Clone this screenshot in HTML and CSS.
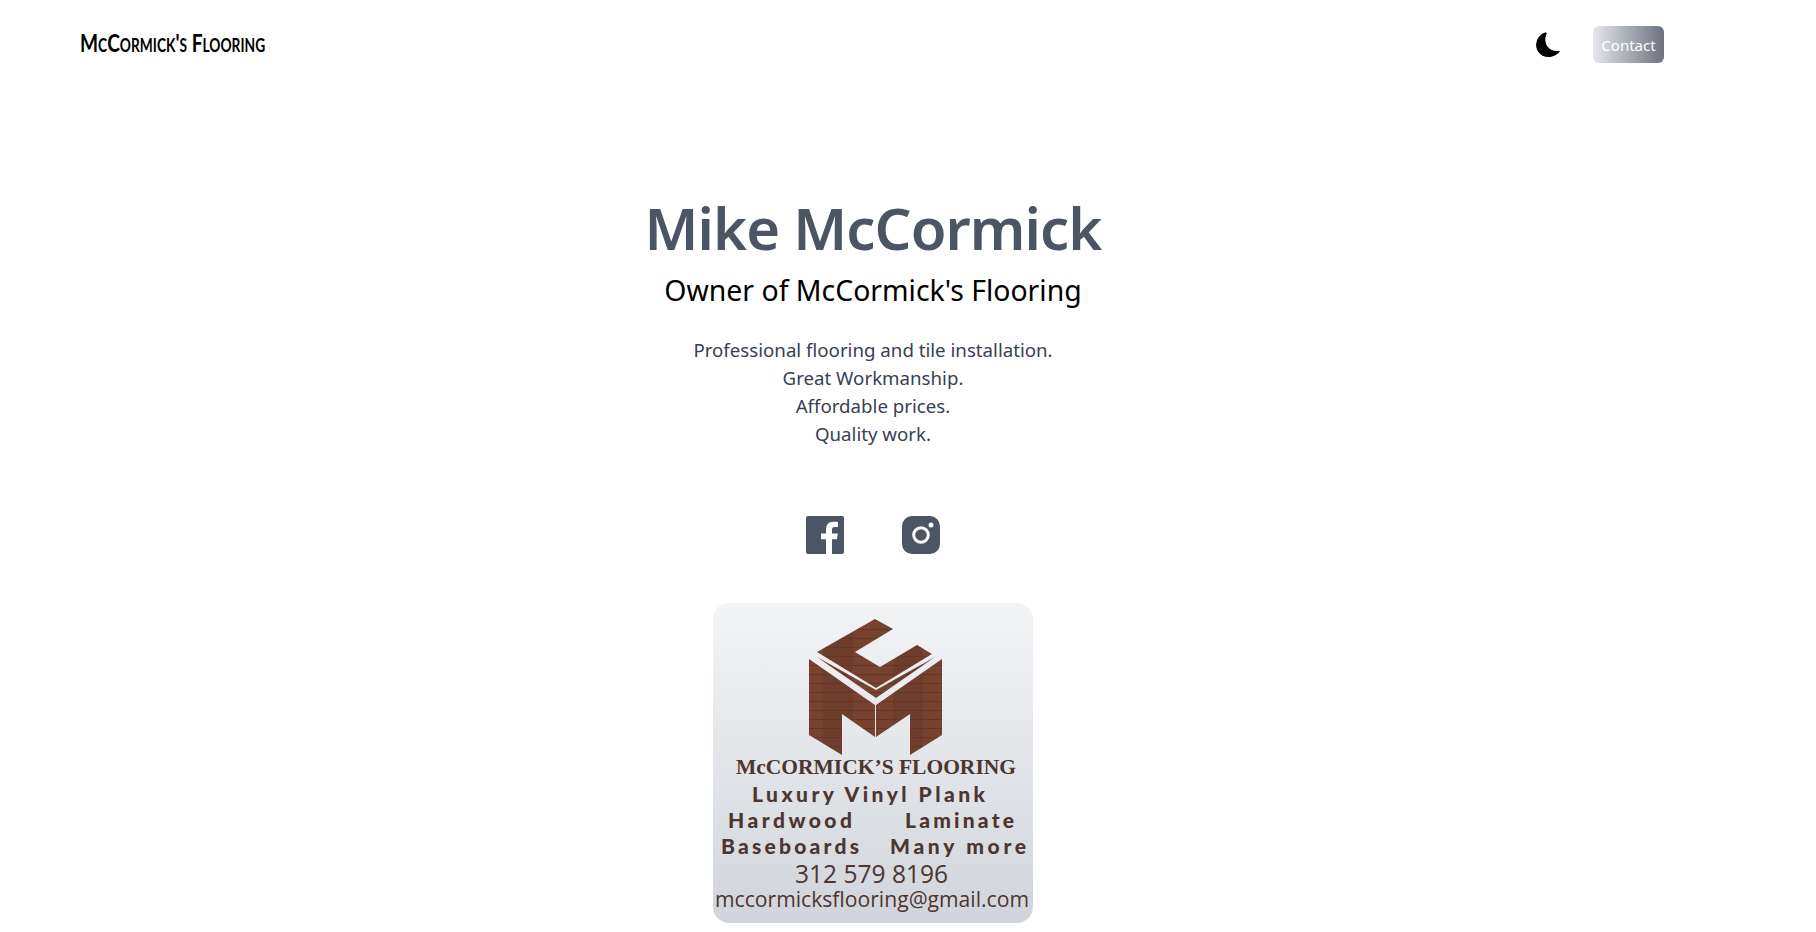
FILE: index.html
```html
<!DOCTYPE html>
<html lang="en">
<head>
<meta charset="utf-8">
<title>McCormick's Flooring</title>
<link rel="stylesheet" href="styles.css">
</head>
<body>
<header class="topbar">
  <a class="brand" href="#">McCormick's Flooring</a>
  <div class="actions">
    <button class="theme" aria-label="Toggle theme">
      <svg viewBox="0 0 24 24" width="26" height="26"><path fill="#000" d="M10.2 1.2A11.6 11.6 0 0 0 1 12.6C1 19 6.2 24.1 12.6 24.1c3.6 0 7.5-1.6 10.2-5.1.3-.4 0-.9-.5-.8-1 .2-1.9.2-2.8.2-5.600 0-10-4.600-10-10.500 0-1.900.5-3.700 1.400-5.300.2-.5-.7-1.400-1.700-1.400z"/></svg>
    </button>
    <a class="contact" href="#">Contact</a>
  </div>
</header>
<main class="hero">
  <h1 class="name">Mike McCormick</h1>
  <h2 class="role">Owner of McCormick's Flooring</h2>
  <p class="blurb">Professional flooring and tile installation.<br>Great Workmanship.<br>Affordable prices.<br>Quality work.</p>
  <div class="social">
    <a href="#" aria-label="Facebook">
      <svg viewBox="0 0 38 38" width="38" height="38"><path fill="#4b5563" d="M2 0h34a2 2 0 0 1 2 2v34a2 2 0 0 1-2 2H26V23.300h5l.8-5.800H26v-3.600c0-1.700.500-2.800 2.900-2.800H32V5.900c-.5-.1-2.400-.2-4.500-.2-4.500 0-7.500 2.700-7.500 7.700v4.100h-5v5.800h5V38H2a2 2 0 0 1-2-2V2a2 2 0 0 1 2-2z"/></svg>
    </a>
    <a href="#" aria-label="Instagram">
      <svg viewBox="0 0 38 38" width="38" height="38"><rect width="38" height="38" rx="10" fill="#4b5563"/><circle cx="19" cy="19" r="7.300" fill="none" stroke="#fff" stroke-width="3"/><circle cx="29" cy="9" r="2.500" fill="#fff"/></svg>
    </a>
  </div>
  <svg class="card" viewBox="0 0 320 320" width="320" height="320" role="img" aria-label="McCormick's Flooring business card">
    <defs>
      <linearGradient id="bg" x1="0" y1="0" x2="0" y2="1"><stop offset="0" stop-color="#f3f4f6"/><stop offset="1" stop-color="#d1d5db"/></linearGradient>
      <pattern id="wood" width="70" height="9" patternUnits="userSpaceOnUse">
        <rect width="70" height="9" fill="#6f3d2b"/>
        <rect width="40" height="9" fill="#774330"/>
        <rect y="8" width="70" height="1" fill="#643528"/>
      </pattern>
    </defs>
    <rect width="320" height="320" rx="16" fill="url(#bg)"/>
    <g fill="url(#wood)">
      <polygon points="162,16 180,26 142,49 167,64 204,42 219,51 163,85 104,49"/>
      <polygon points="104,54 163,87 222,54 163,95"/>
      <polygon points="96,56 162,102 162,134 129,111 129,152 96,132"/>
      <polygon points="229,56 163,102 163,134 197,111 197,152 229,132"/>
    </g>
    <text class="c-firm" x="23" y="171" textLength="280" lengthAdjust="spacingAndGlyphs">McCORMICK’S FLOORING</text>
    <text class="c-line" x="39" y="199" textLength="233">Luxury Vinyl Plank</text>
    <text class="c-line" x="15" y="225" textLength="124">Hardwood</text>
    <text class="c-line" x="192" y="225" textLength="109">Laminate</text>
    <text class="c-line" x="8" y="251" textLength="138">Baseboards</text>
    <text class="c-line" x="177" y="251" textLength="136">Many more</text>
    <text class="c-phone" x="82" y="280" textLength="153" lengthAdjust="spacingAndGlyphs">312 579 8196</text>
    <text class="c-mail" x="2" y="304" textLength="314" lengthAdjust="spacingAndGlyphs">mccormicksflooring@gmail.com</text>
  </svg>
</main>
</body>
</html>
```
FILE: styles.css
```css
* { box-sizing: border-box; }
html, body { margin: 0; height: 932px; overflow: hidden; background: #fff; }
body { font-family: "Noto Sans", "Open Sans", sans-serif; }
.topbar { display: flex; justify-content: space-between; align-items: center; height: 88px; padding: 0 152px 0 80px; }
.brand { font-family: "Lato", sans-serif; font-variant: small-caps; font-weight: 700; font-size: 25px; color: #000; text-decoration: none; display: inline-block; margin-bottom: 4px; transform: scaleX(.765); transform-origin: left center; }
.actions { display: flex; align-items: center; gap: 32px; }
.theme { border: 0; padding: 0; background: none; display: flex; }
.contact { display: block; width: 71px; height: 37px; line-height: 38px; text-align: center; border-radius: 6px; background: linear-gradient(to right, #e5e7eb, #6b7280); color: #fff; font-size: 15px; text-decoration: none; }
.hero { display: flex; flex-direction: column; align-items: center; width: 1746px; padding-top: 110px; }
.name { margin: 0; font-size: 58px; line-height: 60px; font-weight: 600; color: #4b5563; letter-spacing: -.9px; }
.role { margin: 14px 0 0; font-size: 28.4px; line-height: 36px; font-weight: 400; color: #000; }
.blurb { margin: 28px 0 0; font-size: 18.7px; line-height: 28px; text-align: center; color: #374151; }
.social { display: flex; gap: 58px; margin-top: 68px; }
.social a { display: block; height: 38px; }
.card { display: block; margin-top: 49px; flex: none; }
.c-firm { font: 700 21px "Liberation Serif", serif; fill: #4d3530; }
.c-line { font: 900 21px "Lato", sans-serif; fill: #4d3530; }
.c-phone { font: 500 25px "Open Sans", sans-serif; fill: #4d3530; }
.c-mail { font: 500 21px "Open Sans", sans-serif; fill: #4d3530; }
```
